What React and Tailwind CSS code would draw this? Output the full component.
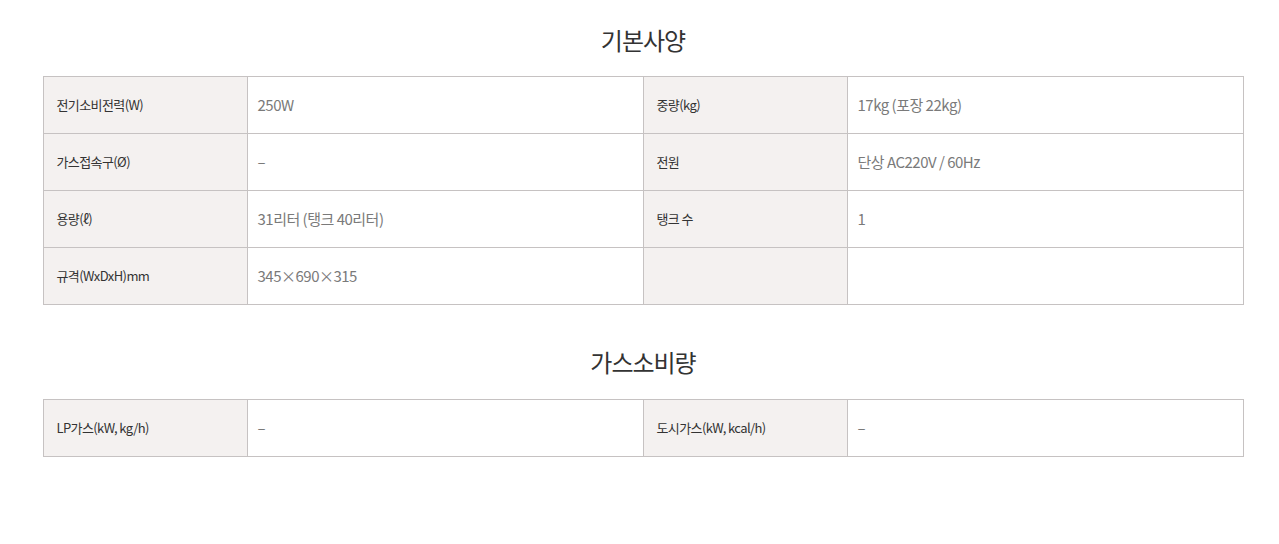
import React from 'react';

const basicSpec = [
  ['전기소비전력(W)', '250W', '중량(kg)', '17kg (포장 22kg)'],
  ['가스접속구(Ø)', '–', '전원', '단상 AC220V / 60Hz'],
  ['용량(ℓ)', '31리터 (탱크 40리터)', '탱크 수', '1'],
  ['규격(WxDxH)mm', '345×690×315', '', ''],
];

const gasSpec = [['LP가스(kW, kg/h)', '–', '도시가스(kW, kcal/h)', '–']];

const SpecTable = ({ rows }) => (
  <table className="w-[1200px] table-fixed border-collapse border border-[#c6c2c2]">
    <colgroup>
      <col className="w-[204px]" />
      <col className="w-[396px]" />
      <col className="w-[204px]" />
      <col className="w-[396px]" />
    </colgroup>
    <tbody>
      {rows.map((row, i) => (
        <tr key={i} className="h-[57px]">
          <th className="border border-[#c6c2c2] bg-[#f4f1f0] pl-[13px] text-left text-[13px] font-normal tracking-[-0.6px] text-[#333]">
            {row[0]}
          </th>
          <td className="border border-[#c6c2c2] pl-[10px] text-[15px] tracking-[-0.5px] text-[#7a7a7a]">{row[1]}</td>
          <th className="border border-[#c6c2c2] bg-[#f4f1f0] pl-[13px] text-left text-[13px] font-normal tracking-[-0.6px] text-[#333]">
            {row[2]}
          </th>
          <td className="border border-[#c6c2c2] pl-[10px] text-[15px] tracking-[-0.5px] text-[#7a7a7a]">{row[3]}</td>
        </tr>
      ))}
    </tbody>
  </table>
);

export default function App() {
  return (
    <div className="min-h-[544px] bg-white pt-[22px] font-['Noto_Sans_CJK_KR','Noto_Sans',sans-serif]">
      <div className="ml-[43px] flex w-[1200px] flex-col items-center">
        <h2 className="mb-[18px] text-[24px] leading-[36px] tracking-[-1px] text-[#333]">기본사양</h2>
        <SpecTable rows={basicSpec} />
        <h2 className="mb-[19px] mt-[39px] text-[24px] leading-[36px] tracking-[-1px] text-[#333]">가스소비량</h2>
        <SpecTable rows={gasSpec} />
      </div>
    </div>
  );
}
